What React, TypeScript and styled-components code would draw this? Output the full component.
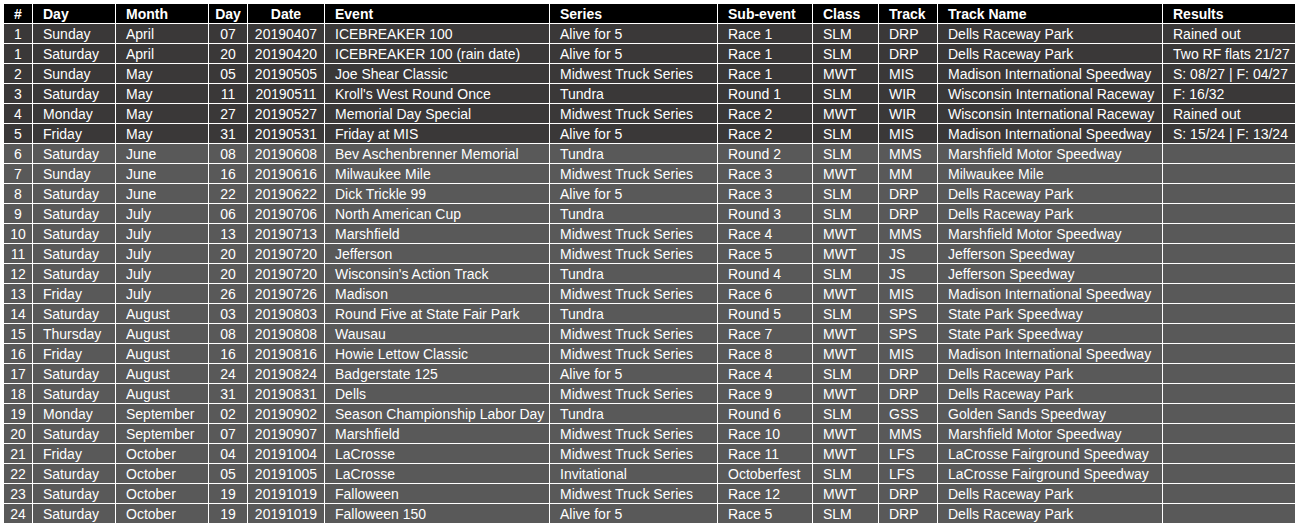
import * as React from 'react';
import styled, { createGlobalStyle } from 'styled-components';

const Global = createGlobalStyle`
  body {
    margin: 0;
    background: #ffffff;
    font-family: "Liberation Sans", Arial, sans-serif;
  }
`;

const Page = styled.div`
  padding: 4px;
`;

const Sheet = styled.div`
  width: 1291px;
  display: grid;
  row-gap: 1px;
  background: #ffffff;
`;

const Row = styled.div<{ $tone: 'head' | 'dark' | 'light' }>`
  display: grid;
  grid-template-columns: 28px 82px 92px 38px 76px 224px 167px 94px 65px 58px 224px 132px;
  column-gap: 1px;
  height: 19px;
  > div {
    background: ${p => (p.$tone === 'head' ? '#000000' : p.$tone === 'dark' ? '#3a3838' : '#595959')};
    font-weight: ${p => (p.$tone === 'head' ? 'bold' : 'normal')};
  }
`;

const Cell = styled.div<{ $center?: boolean }>`
  box-sizing: border-box;
  height: 19px;
  padding-top: 1px;
  color: #ffffff;
  font-size: 14px;
  line-height: 19px;
  white-space: nowrap;
  overflow: hidden;
  text-align: ${p => (p.$center ? 'center' : 'left')};
  padding-left: ${p => (p.$center ? '0' : '10px')};
`;

const centered = [0, 3, 4];

const headers = ['#', 'Day', 'Month', 'Day', 'Date', 'Event', 'Series', 'Sub-event', 'Class', 'Track', 'Track Name', 'Results'];

const rows: string[][] = [
  ['1', 'Sunday', 'April', '07', '20190407', 'ICEBREAKER 100', 'Alive for 5', 'Race 1', 'SLM', 'DRP', 'Dells Raceway Park', 'Rained out'],
  ['1', 'Saturday', 'April', '20', '20190420', 'ICEBREAKER 100 (rain date)', 'Alive for 5', 'Race 1', 'SLM', 'DRP', 'Dells Raceway Park', 'Two RF flats 21/27'],
  ['2', 'Sunday', 'May', '05', '20190505', 'Joe Shear Classic', 'Midwest Truck Series', 'Race 1', 'MWT', 'MIS', 'Madison International Speedway', 'S: 08/27 | F: 04/27'],
  ['3', 'Saturday', 'May', '11', '20190511', "Kroll's West Round Once", 'Tundra', 'Round 1', 'SLM', 'WIR', 'Wisconsin International Raceway', 'F: 16/32'],
  ['4', 'Monday', 'May', '27', '20190527', 'Memorial Day Special', 'Midwest Truck Series', 'Race 2', 'MWT', 'WIR', 'Wisconsin International Raceway', 'Rained out'],
  ['5', 'Friday', 'May', '31', '20190531', 'Friday at MIS', 'Alive for 5', 'Race 2', 'SLM', 'MIS', 'Madison International Speedway', 'S: 15/24 | F: 13/24'],
  ['6', 'Saturday', 'June', '08', '20190608', 'Bev Aschenbrenner Memorial', 'Tundra', 'Round 2', 'SLM', 'MMS', 'Marshfield Motor Speedway', ''],
  ['7', 'Sunday', 'June', '16', '20190616', 'Milwaukee Mile', 'Midwest Truck Series', 'Race 3', 'MWT', 'MM', 'Milwaukee Mile', ''],
  ['8', 'Saturday', 'June', '22', '20190622', 'Dick Trickle 99', 'Alive for 5', 'Race 3', 'SLM', 'DRP', 'Dells Raceway Park', ''],
  ['9', 'Saturday', 'July', '06', '20190706', 'North American Cup', 'Tundra', 'Round 3', 'SLM', 'DRP', 'Dells Raceway Park', ''],
  ['10', 'Saturday', 'July', '13', '20190713', 'Marshfield', 'Midwest Truck Series', 'Race 4', 'MWT', 'MMS', 'Marshfield Motor Speedway', ''],
  ['11', 'Saturday', 'July', '20', '20190720', 'Jefferson', 'Midwest Truck Series', 'Race 5', 'MWT', 'JS', 'Jefferson Speedway', ''],
  ['12', 'Saturday', 'July', '20', '20190720', "Wisconsin's Action Track", 'Tundra', 'Round 4', 'SLM', 'JS', 'Jefferson Speedway', ''],
  ['13', 'Friday', 'July', '26', '20190726', 'Madison', 'Midwest Truck Series', 'Race 6', 'MWT', 'MIS', 'Madison International Speedway', ''],
  ['14', 'Saturday', 'August', '03', '20190803', 'Round Five at State Fair Park', 'Tundra', 'Round 5', 'SLM', 'SPS', 'State Park Speedway', ''],
  ['15', 'Thursday', 'August', '08', '20190808', 'Wausau', 'Midwest Truck Series', 'Race 7', 'MWT', 'SPS', 'State Park Speedway', ''],
  ['16', 'Friday', 'August', '16', '20190816', 'Howie Lettow Classic', 'Midwest Truck Series', 'Race 8', 'MWT', 'MIS', 'Madison International Speedway', ''],
  ['17', 'Saturday', 'August', '24', '20190824', 'Badgerstate 125', 'Alive for 5', 'Race 4', 'SLM', 'DRP', 'Dells Raceway Park', ''],
  ['18', 'Saturday', 'August', '31', '20190831', 'Dells', 'Midwest Truck Series', 'Race 9', 'MWT', 'DRP', 'Dells Raceway Park', ''],
  ['19', 'Monday', 'September', '02', '20190902', 'Season Championship Labor Day', 'Tundra', 'Round 6', 'SLM', 'GSS', 'Golden Sands Speedway', ''],
  ['20', 'Saturday', 'September', '07', '20190907', 'Marshfield', 'Midwest Truck Series', 'Race 10', 'MWT', 'MMS', 'Marshfield Motor Speedway', ''],
  ['21', 'Friday', 'October', '04', '20191004', 'LaCrosse', 'Midwest Truck Series', 'Race 11', 'MWT', 'LFS', 'LaCrosse Fairground Speedway', ''],
  ['22', 'Saturday', 'October', '05', '20191005', 'LaCrosse', 'Invitational', 'Octoberfest', 'SLM', 'LFS', 'LaCrosse Fairground Speedway', ''],
  ['23', 'Saturday', 'October', '19', '20191019', 'Falloween', 'Midwest Truck Series', 'Race 12', 'MWT', 'DRP', 'Dells Raceway Park', ''],
  ['24', 'Saturday', 'October', '19', '20191019', 'Falloween 150', 'Alive for 5', 'Race 5', 'SLM', 'DRP', 'Dells Raceway Park', ''],
];

export default function App() {
  return (
    <Page>
      <Global />
      <Sheet>
        <Row $tone="head">
          {headers.map((h, i) => (
            <Cell key={i} $center={centered.includes(i)}>{h}</Cell>
          ))}
        </Row>
        {rows.map((r, ri) => (
          <Row key={ri} $tone={ri < 6 ? 'dark' : 'light'}>
            {r.map((v, i) => (
              <Cell key={i} $center={centered.includes(i)}>{v}</Cell>
            ))}
          </Row>
        ))}
      </Sheet>
    </Page>
  );
}
